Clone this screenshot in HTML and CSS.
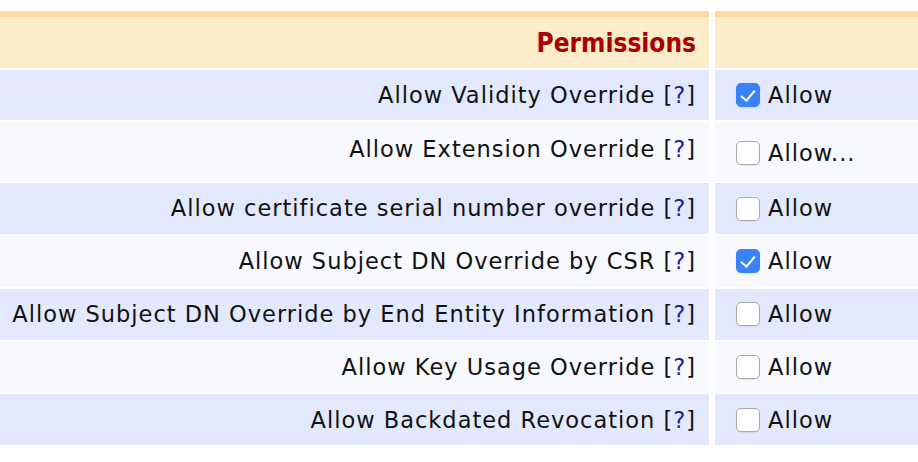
FILE: index.html
```html
<!DOCTYPE html>
<html lang="en">
<head>
  <meta charset="UTF-8" />
  <title>Permissions</title>
  <link rel="stylesheet" href="styles.css">
</head>
<body>
  <table class="perms">
    <colgroup>
      <col class="col-label" />
      <col class="col-value" />
    </colgroup>
    <thead>
      <tr>
        <th class="title">Permissions</th>
        <th></th>
      </tr>
    </thead>
    <tbody>
      <tr class="even">
        <td class="label">Allow Validity Override <a href="#">[<span>?</span>]</a></td>
        <td class="value"><label><input type="checkbox" checked /> Allow</label></td>
      </tr>
      <tr class="odd tall">
        <td class="label">Allow Extension Override <a href="#">[<span>?</span>]</a></td>
        <td class="value"><label><input type="checkbox" /> Allow...</label></td>
      </tr>
      <tr class="even">
        <td class="label">Allow certificate serial number override <a href="#">[<span>?</span>]</a></td>
        <td class="value"><label><input type="checkbox" /> Allow</label></td>
      </tr>
      <tr class="odd">
        <td class="label">Allow Subject DN Override by CSR <a href="#">[<span>?</span>]</a></td>
        <td class="value"><label><input type="checkbox" checked /> Allow</label></td>
      </tr>
      <tr class="even">
        <td class="label">Allow Subject DN Override by End Entity Information <a href="#">[<span>?</span>]</a></td>
        <td class="value"><label><input type="checkbox" /> Allow</label></td>
      </tr>
      <tr class="odd">
        <td class="label">Allow Key Usage Override <a href="#">[<span>?</span>]</a></td>
        <td class="value"><label><input type="checkbox" /> Allow</label></td>
      </tr>
      <tr class="even">
        <td class="label">Allow Backdated Revocation <a href="#">[<span>?</span>]</a></td>
        <td class="value"><label><input type="checkbox" /> Allow</label></td>
      </tr>
    </tbody>
  </table>
</body>
</html>
```

FILE: styles.css
```css
html, body {
  margin: 0;
  padding: 0;
  background: #fff;
  overflow: hidden;
}
body {
  font-family: "DejaVu Sans", Verdana, sans-serif;
  font-size: 22.5px;
  letter-spacing: 1px;
  color: #111;
}
.perms {
  margin-top: 9px;
  width: 960px;
  table-layout: fixed;
  border-collapse: separate;
  border-spacing: 6px 2px;
  margin-left: -6px;
}
.col-label { width: 709px; }
.perms th {
  background: #fdecc9;
  border-top: 6px solid #fdd99a;
  height: 56.5px;
  padding: 0;
  box-sizing: border-box;
}
.perms th.title {
  text-align: right;
  padding: 1px 13px 0 0;
  color: #a80000;
  font-family: "DejaVu Sans Condensed", "DejaVu Sans", sans-serif;
  font-size: 26px;
  letter-spacing: 0;
  font-weight: bold;
}
.perms td {
  height: 50.8px;
  padding: 0;
  box-sizing: border-box;
  line-height: 1.1;
}
.perms tr.tall td { height: 59px; }
.even td { background: #e3e9fd; }
.odd td { background: #f7f9fe; }
.label {
  text-align: right;
  padding-right: 13px !important;
  white-space: nowrap;
}
.tall .label { padding-bottom: 4px !important; }
.label a {
  color: #111;
  text-decoration: none;
}
.label a span { color: #1a1aa8; }
.value { padding-left: 21px !important; }
.tall .value { padding-top: 3px !important; }
.value label {
  display: flex;
  align-items: center;
  gap: 8px;
}
.value input {
  appearance: none;
  -webkit-appearance: none;
  margin: 0;
  width: 24px;
  height: 24px;
  border: 1px solid #a9a9a9;
  border-radius: 5px;
  background: #fff;
  box-shadow: 0 1px 1px rgba(0,0,0,0.08);
  position: relative;
  flex: none;
}
.value input:checked {
  background: #3a82f7;
  border-color: #3a82f7;
}
.value input:checked::after {
  content: "";
  position: absolute;
  left: 7px;
  top: 3px;
  width: 6px;
  height: 12px;
  border: solid #fff;
  border-width: 0 2.5px 2.5px 0;
  transform: rotate(40deg);
}
```
